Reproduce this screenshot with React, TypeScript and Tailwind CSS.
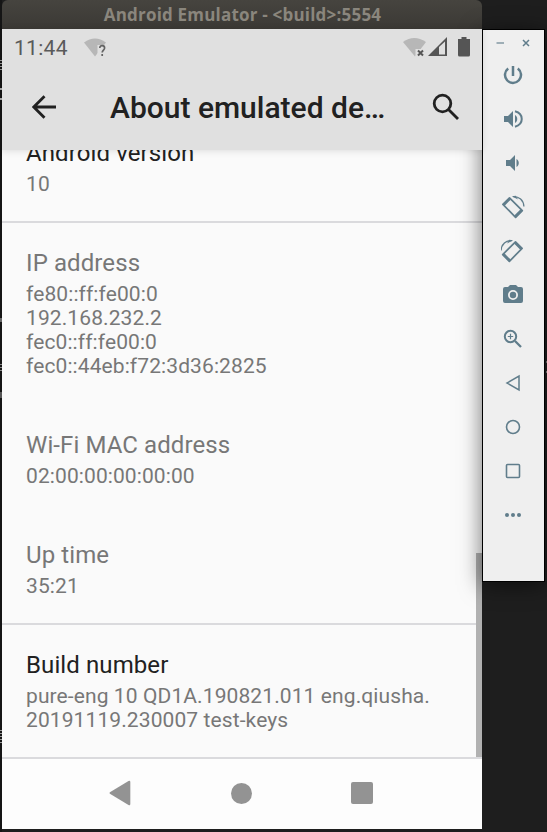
import type { ReactNode } from "react";

function Tool({ children }: { children: ReactNode }) {
  return (
    <button className="flex h-11 w-full items-center justify-center pr-0.5 text-[#607d8b]">
      <svg width="24" height="24" viewBox="0 0 24 24" fill="none" stroke="currentColor" strokeWidth="2">
        {children}
      </svg>
    </button>
  );
}

function TurnedPhone() {
  return (
    <>
      <path strokeWidth="1.700" strokeLinejoin="round" d="M8.500 2.800 1.900 9.400 14.600 22.300 21.300 15.600Z" />
      <path strokeWidth="2.500" d="m8.800 3.800-6 6M20.500 15.200l-6.300 6.300" />
      <path strokeWidth="1.300" d="M12 1.600C18 1.300 22.600 5 22.900 11.500" />
      <path fill="currentColor" stroke="none" d="m10.800 1.300 4-.5 2.200 3.700Z" />
    </>
  );
}

function Toolbar() {
  return (
    <aside className="relative mt-[29px] flex h-[553px] w-[63px] flex-col border border-black bg-[#efefef] shadow-[0_3px_22px_rgba(0,0,0,0.55)]">
      <div className="flex h-[26px] items-center justify-center gap-[17px] pr-px text-[#607d8b]">
        <svg width="9" height="10" viewBox="0 0 9 10" stroke="currentColor" strokeWidth="1.500" opacity=".75"><path d="M.5 5h7.500" /></svg>
        <svg width="9" height="10" viewBox="0 0 9 10" stroke="currentColor" strokeWidth="1.500"><path d="m1 2 6 6m0-6-6 6" /></svg>
      </div>
      <div className="-mt-[3px] flex flex-col">
        <Tool><path d="M12 3v10M7.200 5.500a8 8 0 1 0 9.600 0" strokeWidth="2.500" /></Tool>
        <Tool>
          <path d="M3 9v6h4l5 5V4L7 9Z" fill="currentColor" stroke="none" />
          <path d="M14 8v8c3-1.500 3-6.500 0-8Z" fill="currentColor" stroke="none" />
          <path d="M14 4.300c9 2.500 9 12.900 0 15.400" />
        </Tool>
        <Tool>
          <path d="M5 9v6h4l5 5V4L9 9ZM15.500 8v8c3-1.500 3-6.500 0-8Z" fill="currentColor" stroke="none" />
        </Tool>
        <Tool><TurnedPhone /></Tool>
        <Tool><g transform="translate(23 0) scale(-1 1)"><TurnedPhone /></g></Tool>
        <Tool>
          <path fill="currentColor" stroke="none" fillRule="evenodd" d="M9 2 7 4H4q-2 0-2 2v12q0 2 2 2h16q2 0 2-2V6q0-2-2-2h-3l-2-2Zm3 5a5 5 0 1 1 0 10 5 5 0 0 1 0-10Z" />
          <circle cx="12" cy="12" r="3.200" fill="currentColor" stroke="none" />
        </Tool>
        <Tool>
          <circle cx="9.500" cy="9.500" r="5.700" />
          <path d="m14 14 6 6" strokeWidth="2.300" /><path d="M6.800 9.500h5.400M9.500 6.800v5.400" strokeWidth="1.200" />
        </Tool>
        <Tool><path d="M18 5v14L6 12Z" strokeWidth="1.500" /></Tool>
        <Tool><circle cx="12" cy="12" r="6.500" strokeWidth="1.600" /></Tool>
        <Tool><rect x="5.500" y="5.500" width="13" height="13" rx="1" strokeWidth="1.600" /></Tool>
        <Tool>
          <g fill="currentColor" stroke="none"><circle cx="6" cy="12" r="2" /><circle cx="12" cy="12" r="2" /><circle cx="18" cy="12" r="2" /></g>
        </Tool>
      </div>
    </aside>
  );
}

function StatusBar() {
  return (
    <div className="flex h-9 items-center pl-3 pr-3">
      <span className="mt-[3px] w-[70px] text-[21px] font-[450] tracking-[0.3px] text-[#5a5a5a]">11:44</span>
      <svg className="mt-px" width="24" height="20" viewBox="0 0 24 20">
        <path d="M0 4.500Q11-3.500 22 4.500L11 18.500Z" fill="#b7b7b7" />
        <path d="M13.500 19V7H23v12Z" fill="#e0e0e0" />
        <path d="M15.800 10c0-3.300 4.800-3 4.800 0 0 2-2.400 2.100-2.400 4.500m0 1.500v2" fill="none" stroke="#646464" strokeWidth="1.700" />
      </svg>
      <div className="ml-auto flex items-center">
        <svg width="24" height="20" viewBox="0 0 24 20">
          <path d="M0 5Q11-3 23 5L12 19.500Z" fill="#b7b7b7" />
          <path d="M12.500 20v-8H23v8Z" fill="#e0e0e0" />
          <path d="m15 13.500 5 5m0-5-5 5" stroke="#555" strokeWidth="2" />
        </svg>
        <svg className="ml-px" width="19" height="20" viewBox="0 0 19 20">
          <path d="M0 19 19 0v19Z" fill="#555" /><path d="M11 10 17 4.500V17.500h-6Z" fill="#e0e0e0" />
        </svg>
        <svg className="ml-[11px]" width="12" height="20" viewBox="0 0 12 20">
          <path d="M3.500 0h5v2H12v16q0 1.500-1.500 1.500h-9Q0 19.500 0 18V2h3.500Z" fill="#555" />
        </svg>
      </div>
    </div>
  );
}

function Setting({ title, lines, dark }: { title: string; lines: string[]; dark?: boolean }) {
  return (
    <div className="px-6">
      <div className={`text-[24px] leading-7 tracking-[0.1px] ${dark ? "text-[#212121]" : "text-[#777]"}`}>{title}</div>
      <div className="mt-[5px] text-[21px] leading-6 tracking-[0.1px] text-[#777]">
        {lines.map((line) => <div key={line} className="whitespace-nowrap">{line}</div>)}
      </div>
    </div>
  );
}

function Screen() {
  return (
    <main className="relative flex h-[800px] flex-col bg-[#fafafa]">
      <header className="z-10 h-[121px] bg-[#e0e0e0] shadow-[0_1px_7px_rgba(0,0,0,0.12)]">
        <StatusBar />
        <div className="flex h-[85px] items-center pl-[30px] pr-[22px]">
          <svg className="-mt-0.5" width="24" height="24" viewBox="0 0 24 24" fill="none" stroke="#212121" strokeWidth="2.800"><path d="M24 12H2M12.500 1.300 1.800 12l10.700 10.700" /></svg>
          <h1 className="ml-[54px] text-[30px] font-medium leading-9 text-[#212121]">About emulated de…</h1>
          <svg className="-mt-0.5 ml-auto" width="28" height="28" viewBox="0 0 28 28" fill="none" stroke="#212121" strokeWidth="2.800"><circle cx="10.500" cy="10.500" r="8.300" /><path d="m16.500 16.500 9.500 9.500" /></svg>
        </div>
      </header>
      <section className="-mt-[11px] h-[84px] border-b-2 border-[#dadadd]"><Setting title="Android version" lines={["10"]} dark /></section>
      <section className="flex h-[402px] flex-col gap-[53px] border-b-2 border-[#dadadd] pt-[26px]">
        <Setting title="IP address" lines={["fe80::ff:fe00:0", "192.168.232.2", "fec0::ff:fe00:0", "fec0::44eb:f72:3d36:2825"]} />
        <Setting title="Wi-Fi MAC address" lines={["02:00:00:00:00:00"]} />
        <Setting title="Up time" lines={["35:21"]} />
      </section>
      <section className="h-[134px] border-b-2 border-[#dadadd] pt-[26px]"><Setting title="Build number" lines={["pure-eng 10 QD1A.190821.011 eng.qiusha.", "20191119.230007 test-keys"]} dark /></section>
      <nav className="flex h-[70px] items-center bg-[#fdfdfd] pb-0.5 pl-[107px] text-[#939393]">
        <svg width="22" height="26" viewBox="0 0 22 26" fill="currentColor"><path d="M19.500 1q1.800-.8 1.800 1v22q0 1.800-1.800 1L1.300 14q-1.600-1 0-2Z" /></svg>
        <span className="ml-[100px] size-[21px] rounded-full bg-[#939393]" />
        <span className="ml-[99px] size-[22px] rounded-[2px] bg-[#939393]" />
      </nav>
      <div className="absolute right-0 top-[524px] h-[204px] w-1.5 bg-[#b1b1b1]" />
    </main>
  );
}

export default function App() {
  return (
    <div className="flex h-[832px] w-[547px] overflow-hidden bg-[#1e1e1e] font-['Roboto',sans-serif]">
      <div className="flex w-0.5 shrink-0 flex-col bg-[#151515]">
        <i className="mt-[60px] h-3 bg-[repeating-linear-gradient(#999_0_1px,#151515_1px_3px)]" />
        <i className="mt-4 h-0.5 bg-[#aaa]" /><i className="mt-2 h-0.5 bg-[#aaa]" />
        <i className="mt-[218px] h-1 bg-[#666]" /><i className="mt-[42px] h-2 bg-[repeating-linear-gradient(#888_0_1px,#151515_1px_3px)]" />
        <i className="mt-5 h-1.5 bg-[#555]" />
        <i className="mt-[332px] h-3.5 bg-[repeating-linear-gradient(#999_0_1px,#151515_1px_3px)]" />
      </div>
      <div className="w-[480px] shrink-0">
        <div className="flex h-[29px] items-center justify-center rounded-t-[6px] bg-linear-to-b from-[#46443f] to-[#3b3935] pl-px font-['Open_Sans','Noto_Sans',sans-serif] text-[17px] font-bold tracking-[0.2px] text-[#8a867d]">
          <span className="whitespace-nowrap">Android Emulator - &lt;build&gt;:5554</span>
        </div>
        <Screen />
      </div>
      <Toolbar />
      <div className="ml-px mt-[361px] flex w-px flex-col gap-2"><i className="h-0.5 bg-[#777]" /><i className="h-0.5 bg-[#888]" /></div>
    </div>
  );
}
